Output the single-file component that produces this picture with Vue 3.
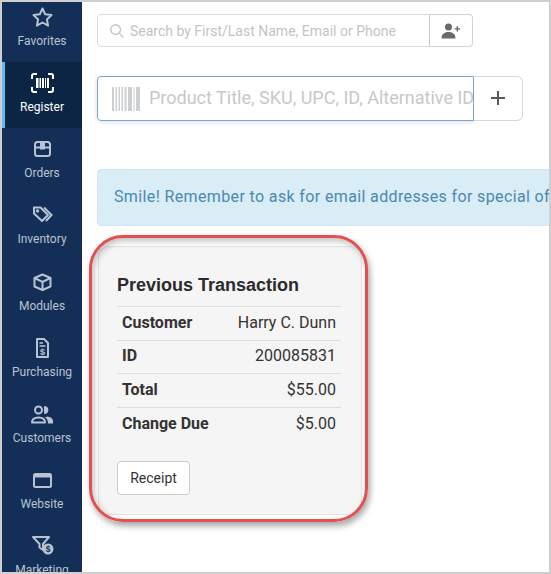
<template>
  <div class="screen">
    <nav class="sidebar">
      <a
        v-for="item in navItems"
        :key="item.label"
        class="nav-item"
        :class="{ active: item.active }"
      >
        <svg class="nav-icon" viewBox="0 0 24 24" fill="none" stroke="currentColor" stroke-width="2" v-html="item.icon"></svg>
        <span>{{ item.label }}</span>
      </a>
    </nav>

    <main class="content">
      <div class="search-row">
        <div class="search-box">
          <svg class="search-icon" viewBox="0 0 15 15" fill="none" stroke="#c4c7cb" stroke-width="1.5">
            <circle cx="6" cy="6" r="5.200" />
            <path d="M9.800 9.800 14.500 14.500" />
          </svg>
          <span>Search by First/Last Name, Email or Phone</span>
        </div>
        <button class="add-customer">
          <svg viewBox="0 0 20 16" width="20" height="16" fill="#666a70">
            <circle cx="7.500" cy="4" r="3.500" />
            <path d="M0.500 15.500c0-4.200 2.600-6.400 7-6.400s7 2.200 7 6.400z" />
            <path d="M15.600 3.200h1.500v2h2v1.400h-2v2h-1.500v-2h-2V5.200h2z" />
          </svg>
        </button>
      </div>

      <div class="product-row">
        <div class="product-box">
          <svg class="barcode" viewBox="0 0 28 24" fill="#cdd0d3">
            <rect x="0" width="2" height="24" />
            <rect x="3.500" width="1.500" height="24" />
            <rect x="6.500" width="1.500" height="24" />
            <rect x="9.500" width="1.500" height="24" />
            <rect x="12.500" width="2" height="24" />
            <rect x="16" width="4" height="24" />
            <rect x="21.500" width="1" height="24" />
            <rect x="24" width="4" height="24" />
          </svg>
          <span>Product Title, SKU, UPC, ID, Alternative ID</span>
        </div>
        <button class="add-product">
          <svg viewBox="0 0 16 16" width="16" height="16" stroke="#555a60" stroke-width="2">
            <path d="M8 1v14M1 8h14" />
          </svg>
        </button>
      </div>

      <div class="alert">Smile! Remember to ask for email addresses for special offers and promotions.</div>

      <section class="card">
        <div class="callout"></div>
        <h2>Previous Transaction</h2>
        <table>
          <tbody>
            <tr v-for="row in rows" :key="row.label">
              <th>{{ row.label }}</th>
              <td>{{ row.value }}</td>
            </tr>
          </tbody>
        </table>
        <button class="receipt">Receipt</button>
      </section>
    </main>
  </div>
</template>

<script setup>
const navItems = [
  { label: 'Favorites', icon: '<path d="M12.500 3.500l2.700 5.800 6.300.8-4.600 4.300 1.200 6.200-5.600-3.100-5.600 3.100 1.200-6.200-4.600-4.300 6.300-.8z" stroke-linejoin="round"/>' },
  {
    label: 'Register',
    active: true,
    icon: '<path d="M7 3H4a2 2 0 0 0-2 2v3M18 3h3a2 2 0 0 1 2 2v3M7 21H4a2 2 0 0 1-2-2v-3M18 21h3a2 2 0 0 0 2-2v-3"/><g fill="currentColor" stroke="none"><rect x="6" y="7" width="2.500" height="10"/><rect x="9.500" y="7" width="1.500" height="10"/><rect x="12" y="7" width="2" height="10"/><rect x="15" y="7" width="1" height="10"/><rect x="17" y="7" width="2" height="10"/></g>',
  },
  { label: 'Orders', icon: '<rect x="5" y="5" width="15" height="14" rx="2.500"/><path d="M5 10.500h15"/><path d="M10 5h5v7.500h-5z" fill="currentColor" stroke="none"/>' },
  { label: 'Inventory', icon: '<path d="M4 4.500h6.500l7.500 7.500-6 6-8-7.500z" stroke-linejoin="round"/><circle cx="7.500" cy="8" r="1" stroke-width="1.500"/><path d="M14 4.500l7.500 7.500-5.500 6" />' },
  { label: 'Modules', icon: '<path d="M12.500 4.500l8 3.500v8.500l-8 3.500-8-3.500V8z" stroke-linejoin="round"/><path d="M4.500 8l8 4 8-4M12.500 12v8"/>' },
  { label: 'Purchasing', icon: '<path d="M7 3h7l4 4v14H7z" stroke-linejoin="round"/><path d="M9.500 7h3.500M9.500 10h6" stroke-width="1.400"/><text x="12.500" y="19" font-size="9" font-weight="700" text-anchor="middle" fill="currentColor" stroke="none" font-family="Liberation Sans, sans-serif">$</text>' },
  { label: 'Customers', icon: '<circle cx="8.500" cy="8" r="3.500"/><path d="M2 20.500c0-3.500 2.700-5 6.500-5s6.500 1.500 6.500 5z" stroke-linejoin="round"/><path d="M14.500 4.500a3.500 3.500 0 0 1 0 7z" fill="currentColor" stroke-width="1"/><path d="M17 14.500c3 .2 6 1.700 6 4.500v2.500h-5c0-3-1-5-3-6z" fill="currentColor" stroke="none"/>' },
  { label: 'Website', icon: '<rect x="4" y="6" width="17" height="13" rx="1.500"/><path d="M4 8h17" stroke-width="3"/>' },
  { label: 'Marketing', icon: '<path d="M3 3h16l-6 7v6l-3.500-2.500V10z" stroke-linejoin="round"/><circle cx="18" cy="15" r="5.500" fill="currentColor" stroke="none"/><text x="18" y="18" font-size="8.500" font-weight="700" text-anchor="middle" fill="#132f57" stroke="none" font-family="Liberation Sans, sans-serif">$</text>' },
]

const rows = [
  { label: 'Customer', value: 'Harry C. Dunn' },
  { label: 'ID', value: '200085831' },
  { label: 'Total', value: '$55.00' },
  { label: 'Change Due', value: '$5.00' },
]
</script>

<style scoped>
.screen {
  display: flex;
  width: 551px;
  height: 574px;
  box-sizing: border-box;
  border: 2px solid #cfcfcf;
  background: #fff;
  overflow: hidden;
  font-family: Roboto, sans-serif;
}

.sidebar {
  flex: 0 0 80px;
  background: #132f57;
  overflow: hidden;
}

.nav-item {
  display: flex;
  flex-direction: column;
  align-items: center;
  height: 66.150px;
  box-sizing: border-box;
  padding-top: 9px;
  color: #b9c3d1;
  font-size: 12px;
  line-height: 16px;
}

.nav-item:first-child {
  margin-top: -6px;
}

.nav-item.active {
  background: #0d2545;
  border-left: 3px solid #5cbdf0;
  padding-right: 3px;
  color: #fff;
}

.nav-icon {
  width: 24px;
  height: 24px;
  margin-bottom: 4px;
}

.content {
  flex: 1;
  min-width: 0;
  overflow: hidden;
  padding: 12px 0 0 15px;
}

.search-row {
  display: flex;
  height: 33px;
  width: 376px;
}

.search-box {
  flex: 1;
  display: flex;
  align-items: center;
  gap: 6px;
  padding-left: 12px;
  border: 1px solid #dcdcdc;
  border-radius: 4px 0 0 4px;
  color: #c2c4c7;
  font-size: 14px;
}

.search-icon {
  width: 14px;
  height: 14px;
}

.add-customer {
  width: 44px;
  display: flex;
  align-items: center;
  justify-content: center;
  padding: 0;
  background: #fff;
  border: 1px solid #d4d4d4;
  border-left-color: #c8c8c8;
  border-radius: 0 4px 4px 0;
  margin-left: -1px;
}

.product-row {
  display: flex;
  height: 45px;
  width: 426px;
  margin-top: 29px;
}

.product-box {
  width: 377px;
  flex: none;
  box-sizing: border-box;
  display: flex;
  align-items: center;
  gap: 9px;
  padding-left: 14px;
  border: 1px solid #7fa3c4;
  border-radius: 4px 0 0 4px;
  box-shadow: 0 1px 5px rgba(127, 170, 210, 0.35);
  color: #c6c8cb;
  font-size: 18px;
  white-space: nowrap;
  overflow: hidden;
}

.product-box span {
  margin-bottom: 2px;
}

.barcode {
  flex: none;
  width: 28px;
  height: 24px;
}

.add-product {
  flex: 1;
  display: flex;
  align-items: center;
  justify-content: center;
  padding: 0 0 2px;
  background: #fff;
  border: 1px solid #d8d8d8;
  border-left: none;
  border-radius: 0 6px 6px 0;
}

.alert {
  margin-top: 48px;
  height: 57px;
  width: 500px;
  box-sizing: border-box;
  padding: 0 0 2px 16px;
  display: flex;
  align-items: center;
  white-space: nowrap;
  overflow: hidden;
  background: #d9edf7;
  border: 1px solid #d0e6f3;
  border-radius: 4px;
  color: #4b88b0;
  font-size: 16px;
  letter-spacing: 0.37px;
}

.card {
  position: relative;
  width: 264px;
  height: 269px;
  box-sizing: border-box;
  margin: 20px 0 0 1px;
  padding: 28px 20px 0 18px;
  background: #f5f5f5;
  border: 1px solid #e4e4e4;
  border-radius: 10px;
}

.callout {
  position: absolute;
  left: -10px;
  top: -12px;
  width: 279px;
  height: 287px;
  box-sizing: border-box;
  border: 3px solid #e25050;
  border-radius: 34px;
  box-shadow: 2px 4px 6px rgba(0, 0, 0, 0.35), inset 2px 3px 6px rgba(0, 0, 0, 0.25);
  pointer-events: none;
}

h2 {
  margin: 0;
  height: 31px;
  font: 700 18px/20px "Liberation Sans", sans-serif;
  color: #2b2b2b;
}

table {
  width: 224px;
  border-collapse: collapse;
  color: #333;
  font-size: 16px;
}

tr {
  height: 33.500px;
  border-top: 1px solid #dcdcdc;
}

th {
  padding: 0 0 2px 5px;
  text-align: left;
  font-weight: 700;
}

td {
  padding: 0 5px 2px 0;
  text-align: right;
}

.receipt {
  display: block;
  margin-top: 20px;
  width: 73px;
  height: 34px;
  padding: 0;
  background: #fff;
  border: 1px solid #ccc;
  border-radius: 4px;
  color: #333;
  font: 14px Roboto, sans-serif;
}
</style>

<style>
html,
body {
  margin: 0;
  overflow: hidden;
}
</style>
